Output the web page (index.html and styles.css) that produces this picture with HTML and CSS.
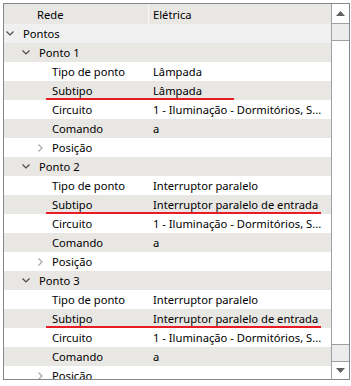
FILE: index.html
```html
<!DOCTYPE html>
<html>
<head>
<meta charset="utf-8">
<link rel="stylesheet" href="styles.css">
</head>
<body>
<div class="tree">
  <div class="main">
    <div class="header">
      <div class="c1 hdr">Rede</div>
      <div class="c2">Elétrica</div>
    </div>
    <div class="rows">
      <div class="row light"><div class="c1 lvl0"><svg class="chev-d" width="8" height="5" viewBox="0 0 8 5"><polyline points="0.5,0.5 4,4 7.5,0.5" fill="none" stroke="#4a4a4a" stroke-width="1.2"/></svg>Pontos</div><div class="c2"></div></div>
      <div class="row gray"><div class="c1 lvl1"><svg class="chev-d" width="8" height="5" viewBox="0 0 8 5"><polyline points="0.5,0.5 4,4 7.5,0.5" fill="none" stroke="#4a4a4a" stroke-width="1.2"/></svg>Ponto 1</div><div class="c2"></div></div>
      <div class="row"><div class="c1 lvl2">Tipo de ponto</div><div class="c2">Lâmpada</div></div>
      <div class="row gray"><div class="c1 lvl2">Subtipo</div><div class="c2">Lâmpada</div><span class="mark short"></span></div>
      <div class="row"><div class="c1 lvl2">Circuito</div><div class="c2">1 - Iluminação - Dormitórios, S...</div></div>
      <div class="row gray"><div class="c1 lvl2">Comando</div><div class="c2">a</div></div>
      <div class="row"><div class="c1 lvl2x"><svg class="chev-r" width="5" height="8" viewBox="0 0 5 8"><polyline points="0.5,0.5 4,4 0.5,7.5" fill="none" stroke="#a6a6a6" stroke-width="1.2"/></svg>Posição</div><div class="c2"></div></div>
      <div class="row gray"><div class="c1 lvl1"><svg class="chev-d" width="8" height="5" viewBox="0 0 8 5"><polyline points="0.5,0.5 4,4 7.5,0.5" fill="none" stroke="#4a4a4a" stroke-width="1.2"/></svg>Ponto 2</div><div class="c2"></div></div>
      <div class="row"><div class="c1 lvl2">Tipo de ponto</div><div class="c2">Interruptor paralelo</div></div>
      <div class="row gray"><div class="c1 lvl2">Subtipo</div><div class="c2">Interruptor paralelo de entrada</div><span class="mark long"></span></div>
      <div class="row"><div class="c1 lvl2">Circuito</div><div class="c2">1 - Iluminação - Dormitórios, S...</div></div>
      <div class="row gray"><div class="c1 lvl2">Comando</div><div class="c2">a</div></div>
      <div class="row"><div class="c1 lvl2x"><svg class="chev-r" width="5" height="8" viewBox="0 0 5 8"><polyline points="0.5,0.5 4,4 0.5,7.5" fill="none" stroke="#a6a6a6" stroke-width="1.2"/></svg>Posição</div><div class="c2"></div></div>
      <div class="row gray"><div class="c1 lvl1"><svg class="chev-d" width="8" height="5" viewBox="0 0 8 5"><polyline points="0.5,0.5 4,4 7.5,0.5" fill="none" stroke="#4a4a4a" stroke-width="1.2"/></svg>Ponto 3</div><div class="c2"></div></div>
      <div class="row"><div class="c1 lvl2">Tipo de ponto</div><div class="c2">Interruptor paralelo</div></div>
      <div class="row gray"><div class="c1 lvl2">Subtipo</div><div class="c2">Interruptor paralelo de entrada</div><span class="mark long"></span></div>
      <div class="row"><div class="c1 lvl2">Circuito</div><div class="c2">1 - Iluminação - Dormitórios, S...</div></div>
      <div class="row gray"><div class="c1 lvl2">Comando</div><div class="c2">a</div></div>
      <div class="row"><div class="c1 lvl2x"><svg class="chev-r" width="5" height="8" viewBox="0 0 5 8"><polyline points="0.5,0.5 4,4 0.5,7.5" fill="none" stroke="#a6a6a6" stroke-width="1.2"/></svg>Posição</div><div class="c2"></div></div>
    </div>
  </div>
  <div class="scrollbar">
    <div class="btn up"><svg width="9" height="5" viewBox="0 0 9 5"><polygon points="0,5 9,5 4.5,0" fill="#606060"/></svg></div>
    <div class="seg"></div>
    <div class="track"></div>
    <div class="seg"></div>
    <div class="btn dn"><svg width="9" height="5" viewBox="0 0 9 5"><polygon points="0,0 9,0 4.5,5" fill="#606060"/></svg></div>
  </div>
</div>
</body>
</html>
```

FILE: styles.css
```css
html, body {
  margin: 0;
  padding: 0;
  background: #ffffff;
}
body {
  padding: 3px 2px 0 3px;
  font-family: "Noto Sans", "Open Sans", sans-serif;
  font-size: 11.2px;
  color: #000000;
}
.tree {
  width: 345px;
  height: 375px;
  border: 1px solid #828790;
  display: flex;
  overflow: hidden;
}
.main {
  width: 327px;
  display: flex;
  flex-direction: column;
  overflow: hidden;
}
.header {
  height: 20px;
  display: flex;
  background: #e9e7e4;
  flex-shrink: 0;
}
.header .c1 {
  border-right: 1px solid #f7f7f7;
}
.rows {
  display: flex;
  flex-direction: column;
}
.row {
  position: relative;
  height: 19px;
  display: flex;
  flex-shrink: 0;
  background: #ffffff;
}
.row.gray { background: #e9e7e4; }
.row.light { background: #f0f0f0; }
.c1 {
  width: 145px;
  box-sizing: border-box;
  display: flex;
  align-items: center;
  white-space: nowrap;
  flex-shrink: 0;
}
.c2 {
  flex: 1;
  padding-left: 4px;
  display: flex;
  align-items: center;
  white-space: nowrap;
  overflow: hidden;
}
.hdr { padding-left: 33px; }
.lvl0 { padding-left: 2px; }
.lvl1 { padding-left: 18px; }
.lvl2 { padding-left: 48px; }
.lvl2x { padding-left: 34px; }
.chev-d {
  flex-shrink: 0;
  margin-right: 9px;
}
.chev-r {
  flex-shrink: 0;
  margin-right: 9px;
}
.mark {
  position: absolute;
  left: 42px;
  top: 17px;
  height: 2px;
  background-color: rgb(232, 28, 36);
  z-index: 2;
}
.mark.short { width: 188px; }
.mark.long { width: 275px; }
.scrollbar {
  width: 17px;
  border-left: 1px solid #a0a0a0;
  display: flex;
  flex-direction: column;
  background: #ffffff;
}
.btn {
  height: 19px;
  display: flex;
  align-items: center;
  justify-content: center;
  flex-shrink: 0;
}
.btn.up { border-bottom: 1px solid #a0a0a0; }
.btn.dn { height: 17px; border-top: 1px solid #a0a0a0; }
.seg {
  height: 16px;
  background: #ececec;
  flex-shrink: 0;
}
.track {
  flex: 1;
  border-top: 1px solid #a0a0a0;
  border-bottom: 1px solid #a0a0a0;
}
```
